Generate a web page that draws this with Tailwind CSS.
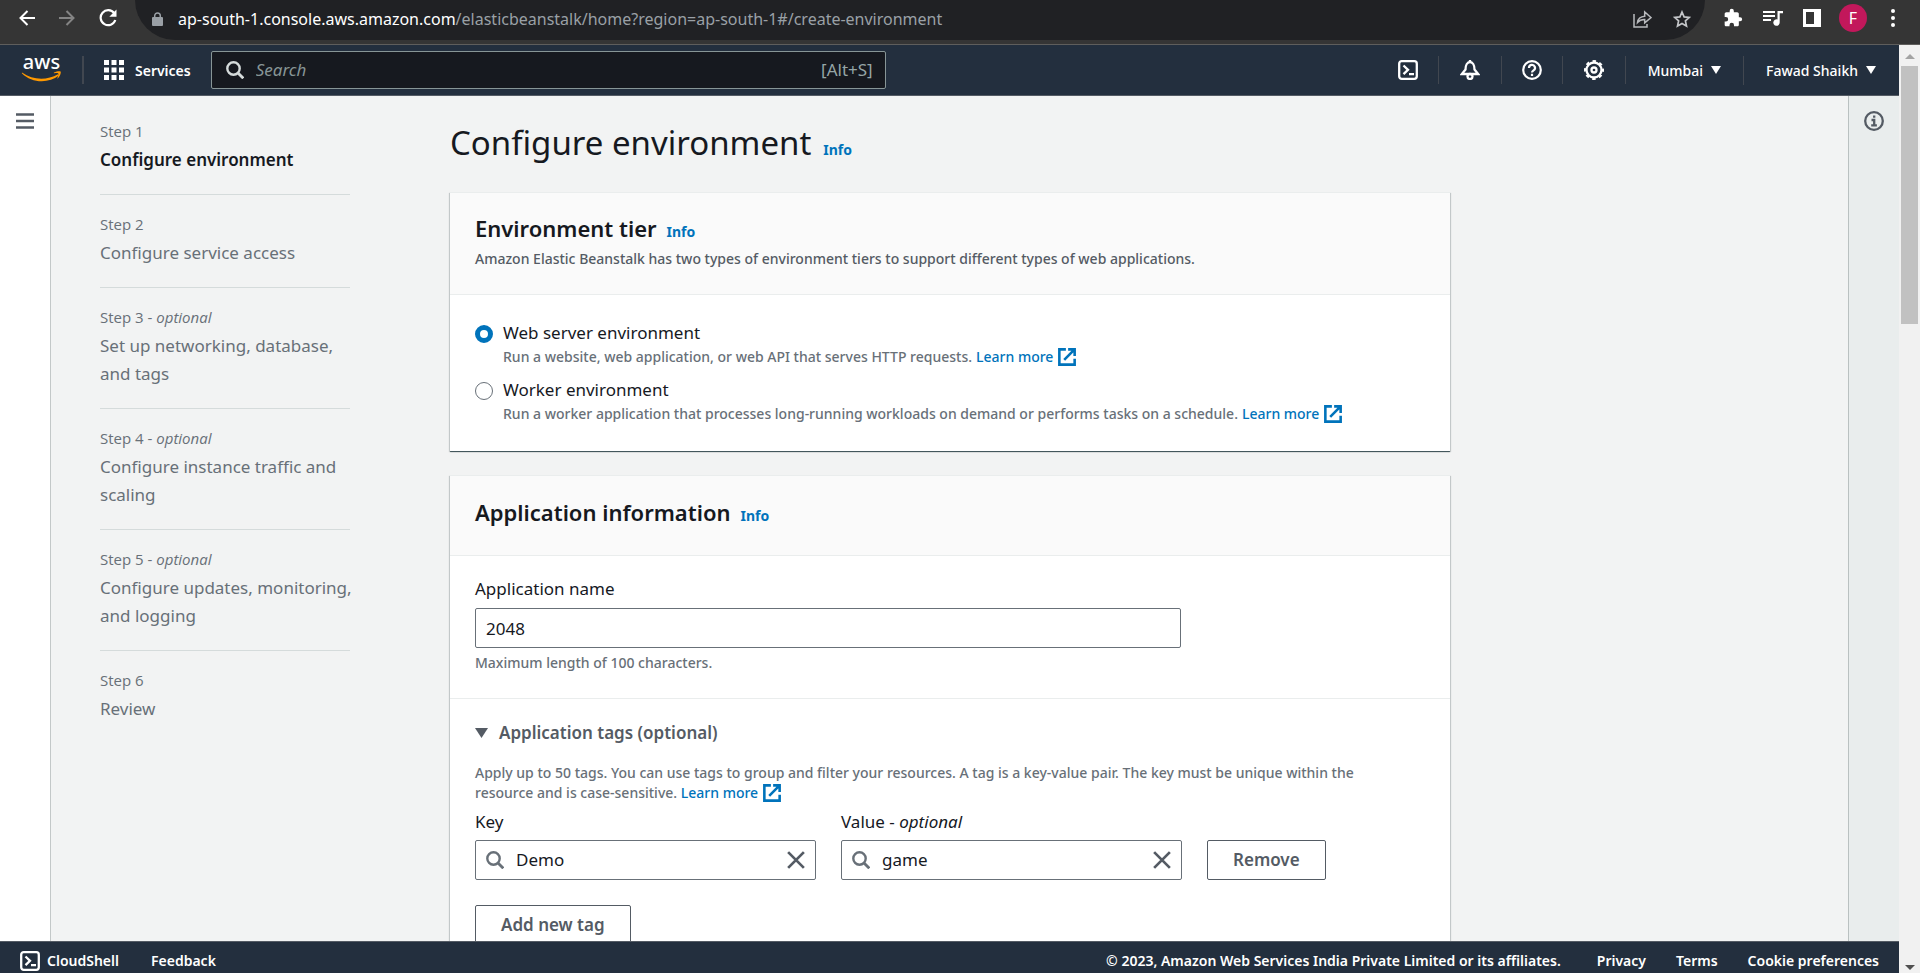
<!DOCTYPE html>
<html lang="en">
<head>
<meta charset="utf-8">
<title>Configure environment</title>
<script src="https://cdn.jsdelivr.net/npm/@tailwindcss/browser@4"></script>
</head>
<body class="flex h-screen flex-col overflow-hidden bg-[#f2f3f3] font-['Noto_Sans','Open_Sans',sans-serif] text-[17px] text-[#16191f]">

<svg class="hidden">
  <symbol id="ext" viewBox="0 0 16 16"><path d="M7 1.200H1.200v13.600h13.600V9.500" fill="none" stroke="currentColor" stroke-width="2.300"/><path d="M9 1.200h5.800V7M14.500 1.500 5.500 10.500" fill="none" stroke="currentColor" stroke-width="2.300"/></symbol>
  <symbol id="mag" viewBox="0 0 18 18"><circle cx="7.500" cy="7.500" r="6.200" fill="none" stroke="currentColor" stroke-width="2.400"/><path d="m12 12 5.300 5.300" stroke="currentColor" stroke-width="2.800"/></symbol>
  <symbol id="shell" viewBox="0 0 20 20"><rect x="1.200" y="1.200" width="17.600" height="17.600" rx="2.500" fill="none" stroke="currentColor" stroke-width="2.300"/><path d="m5.500 5.500 4.500 4.300-4.500 4.300M11 14.200h5" fill="none" stroke="currentColor" stroke-width="2.300"/></symbol>
  <symbol id="close" viewBox="0 0 16 16"><path d="m1 1 14 14M15 1 1 15" stroke="currentColor" stroke-width="2.400"/></symbol>
</svg>

<!-- Browser toolbar -->
<div class="flex h-[45px] shrink-0 items-start border-b border-[#5f5e5c] bg-[#353535] text-white">
  <div class="flex h-9 w-[135px] items-center gap-6 pl-[19px]">
    <button aria-label="Back"><svg class="size-4" viewBox="0 0 16 16" fill="none" stroke="currentColor" stroke-width="2"><path d="M16 8H1.500M8.500 1 1.500 8l7 7"/></svg></button>
    <button aria-label="Forward" class="text-[#848484]"><svg class="size-4" viewBox="0 0 16 16" fill="none" stroke="currentColor" stroke-width="2"><path d="M0 8h14.500M7.500 1l7 7-7 7"/></svg></button>
    <button aria-label="Reload"><svg class="size-[18px]" viewBox="0 0 18 18"><path d="M15.200 4.200A7.500 7.500 0 1 0 16.300 11" fill="none" stroke="currentColor" stroke-width="2.200"/><path d="M17.500.5v7.200h-7.200z" fill="currentColor"/></svg></button>
  </div>
  <div class="flex h-10 flex-1 items-center rounded-b-full rounded-t-[16px] bg-[#202124] pr-[14px] pb-[3px] pl-[17px]">
    <svg class="h-[14px] w-[11px] text-[#9aa0a6]" viewBox="0 0 11 14"><rect y="5" width="11" height="9" rx="1" fill="currentColor"/><path d="M2.700 5.500V3.700a2.800 2.800 0 0 1 5.600 0v1.800" fill="none" stroke="currentColor" stroke-width="1.500"/></svg>
    <p class="ml-[15px] flex-1 text-base text-[#9aa0a6]"><span class="text-white">ap-south-1.console.aws.amazon.com</span>/elasticbeanstalk/home?region=ap-south-1#/create-environment</p>
    <button aria-label="Share" class="mr-[21px] text-[#b8babd]"><svg class="h-[18px] w-[19px]" viewBox="0 0 19 18" fill="none" stroke="currentColor" stroke-width="1.500"><path d="M1 4v13h13v-3"/><path d="M4.500 12.500c.5-4 3-6 7.200-6.300V2l6.300 5.500-6.300 5.300V9.500c-3-.1-5.200.700-7.200 3z"/></svg></button>
    <button aria-label="Bookmark" class="text-[#c4c6c9]"><svg class="size-[18px]" viewBox="0 0 18 18" fill="none" stroke="currentColor" stroke-width="1.700"><path d="m9 2 2.100 4.900 5.200.5-3.900 3.500 1.100 5.200L9 13.400l-4.500 2.700 1.100-5.200L1.700 7.400l5.200-.5z"/></svg></button>
  </div>
  <div class="flex h-9 w-[215px] items-center pl-[18px]">
    <button aria-label="Extensions" class="mr-5"><svg class="size-[20px]" viewBox="0 0 24 24" fill="currentColor"><path d="M20.500 11H19V7c0-1.100-.9-2-2-2h-4V3.500a2.500 2.500 0 0 0-5 0V5H4c-1.100 0-2 .9-2 2v3.800h1.500a2.700 2.700 0 0 1 0 5.400H2V20c0 1.100.9 2 2 2h3.800v-1.500a2.700 2.700 0 0 1 5.400 0V22H17c1.100 0 2-.9 2-2v-4h1.500a2.500 2.500 0 0 0 0-5z"/></svg></button>
    <button aria-label="Media" class="mr-5"><svg class="h-4 w-5" viewBox="0 0 20 16" fill="currentColor"><path d="M0 1h12v2H0zM0 5h12v2H0zM0 9h8v2H0zM14.500 1H20v2.200h-3.300v9.300a3.200 3.200 0 1 1-2.200-3z"/></svg></button>
    <button aria-label="Side panel" class="mr-[18px]"><svg class="size-[18px]" viewBox="0 0 18 18"><path d="M0 0h18v18H0zM3 3v12h8V3z" fill="currentColor" fill-rule="evenodd"/></svg></button>
    <button aria-label="Profile" class="mr-6 grid size-7 place-items-center rounded-full bg-[#c2185b] text-base leading-none">F</button>
    <button aria-label="Menu"><svg class="h-[18px] w-1" viewBox="0 0 4 18" fill="currentColor"><circle cx="2" cy="2" r="2"/><circle cx="2" cy="9" r="2"/><circle cx="2" cy="16" r="2"/></svg></button>
  </div>
</div>

<div class="flex min-h-0 flex-1">
  <div class="flex min-w-0 flex-1 flex-col">

    <!-- Console navigation -->
    <header class="flex h-[51px] shrink-0 items-center border-b border-[#545b64] bg-[#232f3e] text-[14px] font-medium text-white">
      <a href="#" aria-label="AWS home" class="pl-[21px]"><svg class="h-7 w-[42px] overflow-visible" viewBox="0 0 42 28"><text x="20.500" y="13" text-anchor="middle" font-family="Noto Sans, sans-serif" font-size="20" font-weight="500" fill="#fff">aws</text><path d="M1 16.500c11 8 25 8 36 1.800l.8 1.200C28 27.500 11 27.500.8 17.200z" fill="#ff9900"/><path d="M33 16.500c3-1.500 6-1.600 6.600-.9.6.8-.2 4.400-2.600 6.700-.5.400-.9.200-.6-.4.700-1.700 1.400-3.900.9-4.500s-2.500-.4-4-.2c-.5 0-.7-.4-.3-.7z" fill="#ff9900"/></svg></a>
      <span class="ml-[19px] h-7 w-[2px] bg-[#414750]"></span>
      <button class="ml-5 flex items-center gap-[11px] font-semibold"><svg class="size-5" viewBox="0 0 20 20" fill="currentColor"><path d="M0 0h5v5H0zM7.500 0h5v5h-5zM15 0h5v5h-5zM0 7.500h5v5H0zM7.500 7.500h5v5h-5zM15 7.500h5v5h-5zM0 15h5v5H0zM7.500 15h5v5h-5zM15 15h5v5h-5z"/></svg>Services</button>
      <label class="ml-5 flex h-[38px] w-[675px] items-center rounded-[2px] border border-[#879596] bg-[#16191f] pr-3 pl-[14px] text-[17px] font-normal text-[#95a5a6]">
        <svg class="size-[18px] shrink-0 text-[#d5dbdb]"><use href="#mag"/></svg>
        <input type="search" aria-label="Search" placeholder="Search" class="ml-[12px] min-w-0 flex-1 bg-transparent outline-none placeholder:text-[#879596] placeholder:italic">
        <span>[Alt+S]</span>
      </label>
      <div class="ml-auto flex items-center">
        <button aria-label="CloudShell" class="border-r border-[#414750] px-5 py-1"><svg class="size-5"><use href="#shell"/></svg></button>
        <button aria-label="Notifications" class="border-r border-[#414750] px-[21px] py-1"><svg class="size-5" viewBox="0 0 20 20" fill="none" stroke="currentColor" stroke-width="2.300"><path d="M1.800 14h16.400L14.500 9.500C14.500 5 12.500 2 10 2S5.500 5 5.500 9.500z"/><path d="M10 0v2"/><circle cx="10" cy="16.500" r="2.500"/></svg></button>
        <button aria-label="Help" class="border-r border-[#414750] px-5 py-1"><svg class="size-5" viewBox="0 0 20 20" fill="none" stroke="currentColor" stroke-width="2.200"><circle cx="10" cy="10" r="8.800"/><path d="M7 8a3 3 0 1 1 4.600 2.400c-1 .7-1.600 1.100-1.600 2.200M10 13.800V16"/></svg></button>
        <button aria-label="Settings" class="border-r border-[#414750] px-[21px] py-1"><svg class="size-5" viewBox="0 0 20 20" fill="none" stroke="currentColor"><circle cx="10" cy="10" r="7.500" stroke-width="2.300"/><circle cx="10" cy="10" r="9" stroke-width="2" stroke-dasharray="3.500 3.570" stroke-dashoffset="1.750"/><circle cx="10" cy="10" r="2.500" stroke-width="2.300"/></svg></button>
        <button class="flex items-center gap-2 border-r border-[#414750] px-[22px] py-1">Mumbai<svg class="h-2 w-[10px]" viewBox="0 0 10 8"><path d="M0 0h10L5 8z" fill="currentColor"/></svg></button>
        <button class="flex items-center gap-2 pr-[23px] pl-[22px]">Fawad Shaikh<svg class="h-2 w-[10px]" viewBox="0 0 10 8"><path d="M0 0h10L5 8z" fill="currentColor"/></svg></button>
      </div>
    </header>

    <div class="flex min-h-0 flex-1 overflow-hidden">
      <div class="flex w-[51px] shrink-0 justify-center border-r border-[#c3c8c8] bg-white pt-[17px]">
        <button aria-label="Open navigation" class="h-4 text-[#545b64]"><svg class="h-4 w-[18px]" viewBox="0 0 18 16" fill="none" stroke="currentColor" stroke-width="2.500"><path d="M0 1.500h18M0 8h18M0 14.500h18"/></svg></button>
      </div>

      <!-- Wizard steps -->
      <nav aria-label="Steps" class="ml-[49px] w-[250px] shrink-0 pt-[6px] text-[#687078]">
        <ol class="divide-y divide-[#d5dbdb]">
          <li class="pt-[19px] pb-5"><p class="mb-[5px] font-['Open_Sans',sans-serif] text-[15px] leading-5">Step 1</p><p class="leading-7 font-semibold text-[#16191f]">Configure environment</p></li>
          <li class="pt-[19px] pb-5"><p class="mb-[5px] font-['Open_Sans',sans-serif] text-[15px] leading-5">Step 2</p><p class="leading-7">Configure service access</p></li>
          <li class="pt-[19px] pb-5"><p class="mb-[5px] font-['Open_Sans',sans-serif] text-[15px] leading-5">Step 3 - <i>optional</i></p><p class="leading-7">Set up networking, database, and tags</p></li>
          <li class="pt-[19px] pb-5"><p class="mb-[5px] font-['Open_Sans',sans-serif] text-[15px] leading-5">Step 4 - <i>optional</i></p><p class="leading-7">Configure instance traffic and scaling</p></li>
          <li class="pt-[19px] pb-5"><p class="mb-[5px] font-['Open_Sans',sans-serif] text-[15px] leading-5">Step 5 - <i>optional</i></p><p class="-mr-2 leading-7">Configure updates, monitoring, and logging</p></li>
          <li class="pt-[19px] pb-5"><p class="mb-[5px] font-['Open_Sans',sans-serif] text-[15px] leading-5">Step 6</p><p class="leading-7">Review</p></li>
        </ol>
      </nav>

      <main class="ml-[100px] max-w-[1000px] min-w-0 flex-1 pt-6">
        <div class="mb-[27px] flex items-baseline gap-3">
          <h1 class="text-[33px] leading-[45px]">Configure environment</h1>
          <a href="#" class="text-[14px] font-bold text-[#0073bb]">Info</a>
        </div>

        <section class="mb-6 border-t border-[#eaeded] bg-white shadow-[0_1px_1px_0_rgba(0,28,36,0.3),1px_1px_1px_0_rgba(0,28,36,0.15),-1px_1px_1px_0_rgba(0,28,36,0.15),0_1px_0_0_#879596]">
          <div class="border-b border-[#eaeded] bg-[#fafafa] px-[25px] pt-5 pb-[25px]">
            <div class="flex items-baseline gap-[10px]"><h2 class="text-[22px] leading-[30px] font-semibold">Environment tier</h2><a href="#" class="text-[14px] font-bold text-[#0073bb]">Info</a></div>
            <p class="mt-[6px] text-[14px] leading-5 font-medium text-[#545b64]">Amazon Elastic Beanstalk has two types of environment tiers to support different types of web applications.</p>
          </div>
          <div class="space-y-[9px] px-[25px] pt-6 pb-[27px]">
            <div class="flex gap-[10px]">
              <input type="radio" name="tier" id="web" checked class="mt-[6px] size-[18px] shrink-0 appearance-none rounded-full border border-[#687078] bg-white checked:border-[5px] checked:border-[#0073bb]">
              <div><label for="web" class="block leading-7">Web server environment</label>
                <p class="flex items-center text-[14px] leading-5 font-medium text-[#687078]">Run a website, web application, or web API that serves HTTP requests.<a href="#" class="ml-1 flex items-center gap-[5px] text-[#0073bb]">Learn more <svg class="size-[18px]"><use href="#ext"/></svg></a></p></div>
            </div>
            <div class="flex gap-[10px]">
              <input type="radio" name="tier" id="worker" class="mt-[6px] size-[18px] shrink-0 appearance-none rounded-full border border-[#687078] bg-white checked:border-[5px] checked:border-[#0073bb]">
              <div><label for="worker" class="block leading-7">Worker environment</label>
                <p class="flex items-center text-[14px] leading-5 font-medium text-[#687078]">Run a worker application that processes long-running workloads on demand or performs tasks on a schedule.<a href="#" class="ml-1 flex items-center gap-[5px] text-[#0073bb]">Learn more <svg class="size-[18px]"><use href="#ext"/></svg></a></p></div>
            </div>
          </div>
        </section>

        <section class="border-t border-[#eaeded] bg-white shadow-[0_1px_1px_0_rgba(0,28,36,0.3),1px_1px_1px_0_rgba(0,28,36,0.15),-1px_1px_1px_0_rgba(0,28,36,0.15)]">
          <div class="flex items-baseline gap-[10px] border-b border-[#eaeded] bg-[#fafafa] px-[25px] pt-[21px] pb-7"><h2 class="text-[22px] leading-[30px] font-semibold">Application information</h2><a href="#" class="text-[14px] font-bold text-[#0073bb]">Info</a></div>
          <div class="border-b border-[#eaeded] px-[25px] pt-[19px] pb-[25px]">
            <label for="app" class="block leading-7">Application name</label>
            <input id="app" value="2048" class="mt-[5px] block h-10 w-3/4 max-w-[706px] rounded-[2px] border border-[#687078] px-[10px]">
            <p class="mt-[5px] text-[14px] leading-5 font-medium text-[#687078]">Maximum length of 100 characters.</p>
          </div>
          <div class="px-[25px] pt-5">
            <button class="flex items-center gap-[11px] leading-7 font-semibold text-[#545b64]"><svg class="h-[10px] w-[13px]" viewBox="0 0 13 10"><path d="M0 0h13L6.500 10z" fill="currentColor"/></svg>Application tags (optional)</button>
            <p class="mt-4 max-w-[920px] text-[14px] leading-5 font-medium text-[#687078]">Apply up to 50 tags. You can use tags to group and filter your resources. A tag is a key-value pair. The key must be unique within the resource and is case-sensitive. <a href="#" class="inline-flex h-5 items-center gap-[5px] align-bottom text-[#0073bb]">Learn more <svg class="size-[18px]"><use href="#ext"/></svg></a></p>
            <div class="mt-[5px] flex items-end gap-[25px]">
              <div class="w-[341px]"><label for="key" class="block leading-7">Key</label>
                <div class="mt-1 flex h-10 items-center rounded-[2px] border border-[#687078] px-[10px] text-[#687078]"><svg class="size-[18px] shrink-0"><use href="#mag"/></svg><input id="key" value="Demo" class="ml-[12px] min-w-0 flex-1 text-[#16191f] outline-none"><button aria-label="Clear key" class="text-[#545b64]"><svg class="size-[18px]"><use href="#close"/></svg></button></div></div>
              <div class="w-[341px]"><label for="val" class="block leading-7">Value - <i>optional</i></label>
                <div class="mt-1 flex h-10 items-center rounded-[2px] border border-[#687078] px-[10px] text-[#687078]"><svg class="size-[18px] shrink-0"><use href="#mag"/></svg><input id="val" value="game" class="ml-[12px] min-w-0 flex-1 text-[#16191f] outline-none"><button aria-label="Clear value" class="text-[#545b64]"><svg class="size-[18px]"><use href="#close"/></svg></button></div></div>
              <button class="h-10 rounded-[2px] border border-[#545b64] px-[25px] font-semibold text-[#545b64]">Remove</button>
            </div>
            <button class="mt-[25px] mb-[25px] h-10 rounded-[2px] border border-[#545b64] px-[25px] font-semibold text-[#545b64]">Add new tag</button>
          </div>
        </section>
      </main>

      <aside class="ml-auto flex w-[51px] shrink-0 justify-center border-l border-[#b9c0c0] bg-[#e9eded] pt-[15px]">
        <button aria-label="Open help panel" class="h-5 text-[#545b64]"><svg class="size-5" viewBox="0 0 20 20" fill="none" stroke="currentColor" stroke-width="2.300"><circle cx="10" cy="10" r="8.800"/><path d="M10.200 4.500v2.200M7.500 9h2.700v5M7.200 14.300h5.700"/></svg></button>
      </aside>
    </div>

    <!-- Footer -->
    <footer class="flex h-8 shrink-0 items-center border-t border-[#545b64] bg-[#232f3e] pt-[6px] pr-5 pl-5 text-[14px] font-semibold text-white">
      <button class="flex items-center gap-[7px]"><svg class="size-5"><use href="#shell"/></svg>CloudShell</button>
      <a href="#" class="ml-8">Feedback</a>
      <p class="mr-9 ml-auto">© 2023, Amazon Web Services India Private Limited or its affiliates.</p>
      <a href="#" class="mr-[30px]">Privacy</a>
      <a href="#" class="mr-[30px]">Terms</a>
      <a href="#">Cookie preferences</a>
    </footer>
  </div>

  <!-- Page scrollbar -->
  <div class="flex w-[21px] shrink-0 flex-col items-center bg-[#f1f1f1] pt-[9px] pb-[3px]">
    <svg class="h-[5px] w-[10px]" viewBox="0 0 10 5"><path d="M0 5h10L5 0z" fill="#a3a3a3"/></svg>
    <div class="mt-[7px] h-[258px] w-[17px] bg-[#c1c1c1]"></div>
    <svg class="mt-auto h-[5px] w-[10px]" viewBox="0 0 10 5"><path d="M0 0h10L5 5z" fill="#505050"/></svg>
  </div>
</div>
</body>
</html>
